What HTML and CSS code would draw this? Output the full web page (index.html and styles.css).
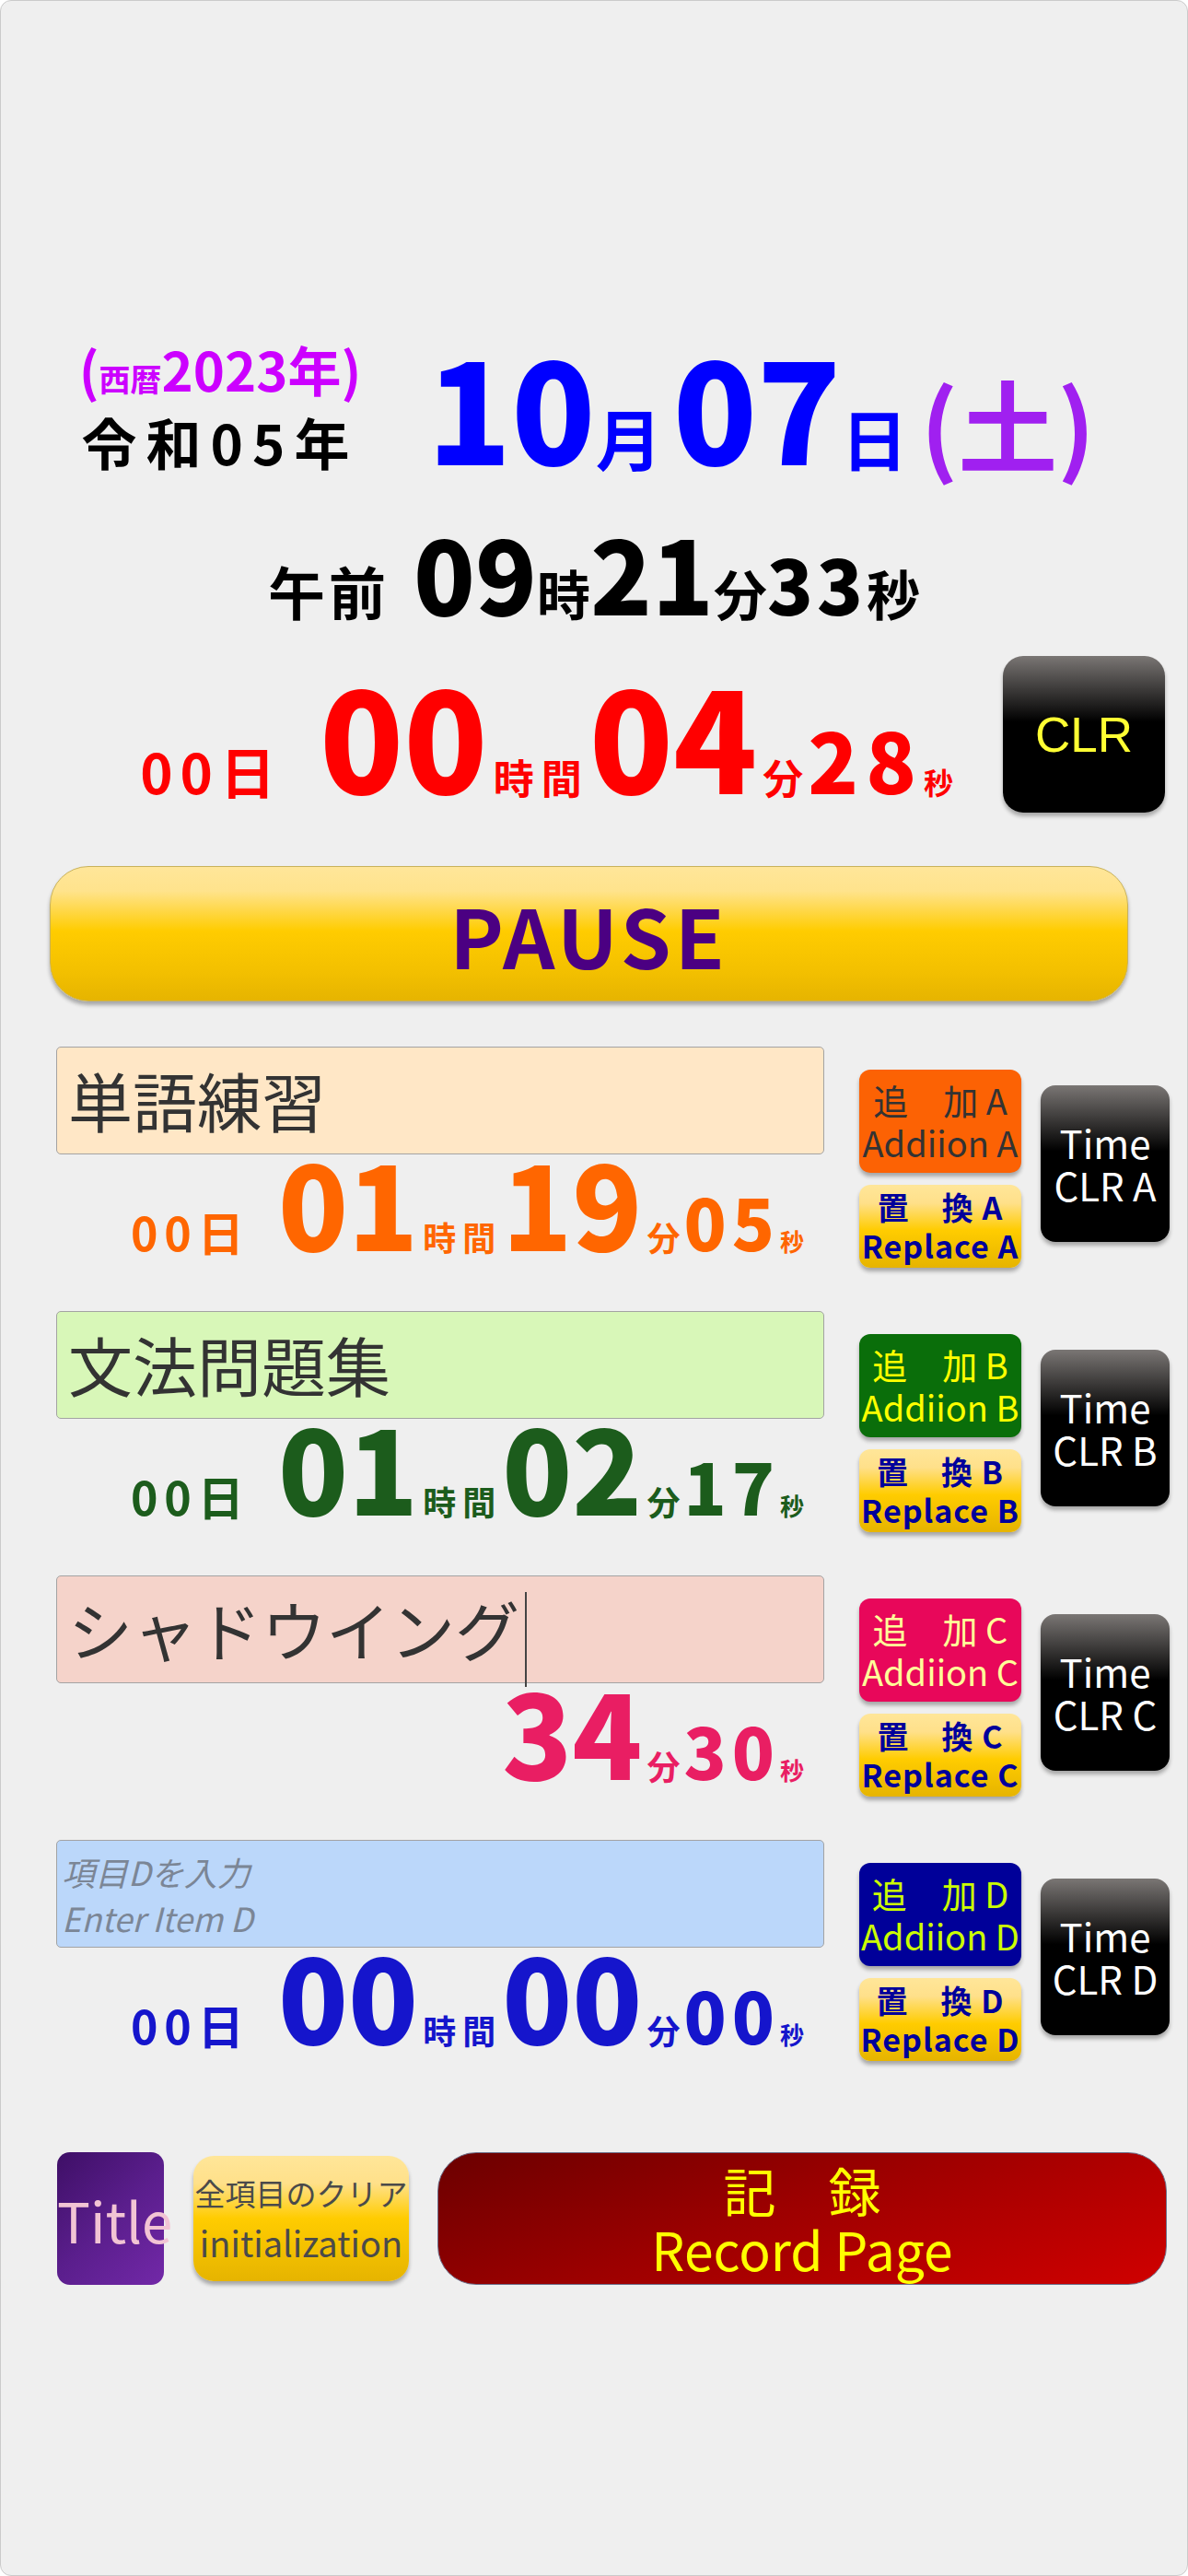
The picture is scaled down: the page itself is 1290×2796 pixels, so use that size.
FILE: index.html
```html
<!DOCTYPE html>
<html lang="ja">
<head>
    <meta charset="UTF-8">
    <meta name="viewport" content="width=device-width, initial-scale=1.0">
    <title>学習タイマー</title>
    <link rel="stylesheet" href="styles.css">
</head>
<body>
    <div class="app">
        <!-- 現在日時 -->
        <div class="date-row">
            <div class="era">
                <div class="seireki">(<span class="s-small">西暦</span>2023年)</div>
                <div class="wareki">令和05年</div>
            </div>
            <div class="date">10<span class="unit">月</span>07<span class="unit">日</span><span class="dow">(土)</span></div>
        </div>
        <div class="time-row">
            <span class="ampm">午前</span>09<span class="tu">時</span>21<span class="tu">分</span><span class="ss">33</span><span class="tu">秒</span>
        </div>

        <!-- 合計時間 -->
        <div class="total">
            <div class="timer timer-main">
                <span class="t-day">00日</span>00<span class="t-unit">時間</span>04<span class="t-unit">分</span><span class="t-sec">28</span><span class="t-sunit">秒</span>
            </div>
            <button class="btn-clr">CLR</button>
        </div>

        <button class="btn-pause">PAUSE</button>

        <!-- 項目 A -->
        <div class="item item-a">
            <div class="item-main">
                <div class="item-name">単語練習</div>
                <div class="timer timer-item">
                    <span class="t-day">00日</span>01<span class="t-unit">時間</span>19<span class="t-unit">分</span><span class="t-sec">05</span><span class="t-sunit">秒</span>
                </div>
            </div>
            <div class="item-btns">
                <button class="btn-add">追　加 A<br>Addiion A</button>
                <button class="btn-replace">置　換 A<br>Replace A</button>
            </div>
            <button class="btn-timeclr">Time<br>CLR A</button>
        </div>

        <!-- 項目 B -->
        <div class="item item-b">
            <div class="item-main">
                <div class="item-name">文法問題集</div>
                <div class="timer timer-item">
                    <span class="t-day">00日</span>01<span class="t-unit">時間</span>02<span class="t-unit">分</span><span class="t-sec">17</span><span class="t-sunit">秒</span>
                </div>
            </div>
            <div class="item-btns">
                <button class="btn-add">追　加 B<br>Addiion B</button>
                <button class="btn-replace">置　換 B<br>Replace B</button>
            </div>
            <button class="btn-timeclr">Time<br>CLR B</button>
        </div>

        <!-- 項目 C -->
        <div class="item item-c">
            <div class="item-main">
                <div class="item-name">シャドウイング<span class="caret"></span></div>
                <div class="timer timer-item">
                    34<span class="t-unit">分</span><span class="t-sec">30</span><span class="t-sunit">秒</span>
                </div>
            </div>
            <div class="item-btns">
                <button class="btn-add">追　加 C<br>Addiion C</button>
                <button class="btn-replace">置　換 C<br>Replace C</button>
            </div>
            <button class="btn-timeclr">Time<br>CLR C</button>
        </div>

        <!-- 項目 D -->
        <div class="item item-d">
            <div class="item-main">
                <div class="item-name placeholder">項目Dを入力<br>Enter Item D</div>
                <div class="timer timer-item">
                    <span class="t-day">00日</span>00<span class="t-unit">時間</span>00<span class="t-unit">分</span><span class="t-sec">00</span><span class="t-sunit">秒</span>
                </div>
            </div>
            <div class="item-btns">
                <button class="btn-add">追　加 D<br>Addiion D</button>
                <button class="btn-replace">置　換 D<br>Replace D</button>
            </div>
            <button class="btn-timeclr">Time<br>CLR D</button>
        </div>

        <div class="footer-row">
            <button class="btn-title">Title</button>
            <button class="btn-init">全項目のクリア<br><span class="init-en">initialization</span></button>
            <button class="btn-record">記　録<br>Record Page</button>
        </div>
    </div>
</body>
</html>
```

FILE: styles.css
```css
* {
    margin: 0;
    padding: 0;
    box-sizing: border-box;
}

body {
    background: #ffffff;
    font-family: "Noto Sans CJK JP", "Noto Sans", sans-serif;
}

button {
    font-family: inherit;
    border: none;
    cursor: pointer;
    box-shadow: 0 4px 4px rgba(0, 0, 0, 0.3);
}

.app {
    width: 1290px;
    height: 2796px;
    border: 1px solid #cbcbcb;
    border-radius: 12px;
    background: #efefef;
    padding-top: 364px;
}

/* 日付 */
.date-row {
    display: flex;
    align-items: last baseline;
}

.era {
    width: 420px;
    padding-left: 56px;
    text-align: center;
}

.seireki {
    font-size: 58px;
    line-height: 58px;
    font-weight: 700;
    color: #cc00ff;
}

.s-small {
    font-size: 34px;
    line-height: 1;
}

.wareki {
    margin-top: 20px;
    font-size: 60px;
    line-height: 60px;
    font-weight: 700;
    letter-spacing: 10px;
    color: #000;
}

.date {
    margin-left: 43px;
    font-size: 150px;
    line-height: 150px;
    font-weight: 900;
    color: #0000ff;
}

.date span,
.time-row span,
.timer span {
    line-height: 1;
}

.date .unit {
    margin-right: 12px;
    font-size: 72px;
    font-weight: 700;
}

.date .dow {
    margin-left: 2px;
    font-size: 108px;
    font-weight: 700;
    color: #a020f0;
}

.time-row {
    margin-top: 50px;
    text-align: center;
    font-size: 110px;
    line-height: 110px;
    font-weight: 900;
    color: #000;
}

.time-row .ampm {
    margin-right: 26px;
    font-size: 62px;
    font-weight: 700;
    letter-spacing: 4px;
}

.time-row .tu {
    font-size: 58px;
    font-weight: 700;
}

.time-row .ss {
    font-size: 82px;
    letter-spacing: 4px;
}

/* タイマー */
.timer {
    font-weight: 900;
    white-space: nowrap;
}

.timer .t-day,
.timer .t-unit,
.timer .t-sunit {
    font-weight: 700;
}

.total {
    display: flex;
    justify-content: flex-end;
    align-items: center;
    gap: 54px;
    margin-top: 37px;
    padding-right: 24px;
}

.timer-main {
    font-size: 150px;
    line-height: 150px;
    color: #ff0000;
}

.timer-main .t-day {
    margin-right: 40px;
    font-size: 60px;
    letter-spacing: 8px;
}

.timer-main .t-unit {
    margin-left: 6px;
    font-size: 44px;
    letter-spacing: 8px;
}

.timer-main .t-sec {
    margin-left: -3px;
    font-size: 90px;
    letter-spacing: 8px;
}

.timer-main .t-sunit {
    font-size: 32px;
}

.btn-clr {
    width: 176px;
    height: 170px;
    border-radius: 22px;
    background: linear-gradient(#7a7674 0%, #000 42%, #000 100%);
    color: #ffff33;
    font-family: "Liberation Sans", Arial, sans-serif;
    font-size: 53px;
}

.btn-pause {
    display: block;
    width: 1171px;
    height: 147px;
    margin: 58px 0 0 53px;
    border: 1px solid #c9b25a;
    border-radius: 42px;
    background: linear-gradient(#ffe699 0%, #ffe38c 18%, #ffcc00 48%, #f3c000 78%, #e6b400 100%);
    color: #4b0082;
    font-size: 88px;
    font-weight: 700;
    letter-spacing: 4px;
}

/* 項目 */
.item {
    display: flex;
    align-items: flex-start;
    height: 217px;
    margin-top: 49px;
    padding-left: 60px;
}

.item + .item {
    margin-top: 70px;
}

.item-main {
    width: 834px;
}

.item-name {
    height: 117px;
    padding-left: 12px;
    border: 1px solid #a3a3a3;
    border-radius: 5px;
    font-size: 70px;
    line-height: 113px;
    color: #333;
}

.caret {
    display: inline-block;
    width: 2px;
    height: 103px;
    margin-left: 6px;
    background: #444;
    vertical-align: middle;
}

.item-name.placeholder {
    padding: 8px 0 0 5px;
    font-size: 36px;
    line-height: 50px;
    font-style: italic;
    color: #7b8696;
}

.item-a .item-name { background: #ffe7c6; }
.item-b .item-name { background: #d8f7b8; }
.item-c .item-name { background: #f5d3ca; }
.item-d .item-name { background: #bbd7fa; }

.timer-item {
    padding-right: 22px;
    text-align: right;
    font-size: 125px;
    line-height: 102px;
}

.timer-item .t-day {
    margin-right: 30px;
    font-size: 50px;
    letter-spacing: 7px;
}

.timer-item .t-unit {
    margin-left: 5px;
    font-size: 36px;
    letter-spacing: 7px;
}

.timer-item .t-sec {
    margin-left: -3px;
    font-size: 76px;
    letter-spacing: 6px;
}

.timer-item .t-sunit {
    font-size: 26px;
}

.item-a .timer-item { color: #ff6600; }
.item-b .timer-item { color: #1c5c1c; }
.item-c .timer-item { color: #e91e63; }
.item-d .timer-item { color: #1515cc; }

.item-btns {
    display: flex;
    flex-direction: column;
    gap: 13px;
    width: 176px;
    margin: 25px 0 0 38px;
}

.btn-add,
.btn-replace {
    width: 176px;
    border-radius: 12px;
    white-space: nowrap;
}

.btn-add {
    height: 112px;
    font-size: 38px;
    line-height: 46px;
}

.btn-replace {
    height: 90px;
    background: linear-gradient(#ffe699 0%, #ffe08a 22%, #ffcc00 55%, #e6b400 100%);
    color: #00009b;
    font-size: 34px;
    font-weight: 700;
    line-height: 42px;
    letter-spacing: 1px;
}

.item-a .btn-add { background: #fc6204; color: #333; }
.item-b .btn-add { background: #0a6e0a; color: #ffff00; }
.item-c .btn-add { background: #e8075a; color: #ffff99; }
.item-d .btn-add { background: #000099; color: #ccff00; }

.btn-timeclr {
    width: 140px;
    height: 170px;
    margin: 42px 0 0 21px;
    border-radius: 16px;
    background: linear-gradient(#7a7674 0%, #000 42%, #000 100%);
    color: #fff;
    font-size: 42px;
    line-height: 46px;
}

/* 下段ボタン */
.footer-row {
    display: flex;
    align-items: center;
    margin-top: 122px;
    padding-left: 61px;
}

.btn-title {
    width: 116px;
    height: 144px;
    border-radius: 14px;
    background: linear-gradient(135deg, #3e0f66 0%, #5a1e8c 50%, #7228a8 100%);
    color: #f2c4d4;
    font-size: 60px;
    box-shadow: none;
}

.btn-init {
    width: 234px;
    height: 136px;
    margin-left: 32px;
    border-radius: 22px;
    background: linear-gradient(#ffe699 0%, #ffe08a 22%, #ffcc00 50%, #e6b400 100%);
    color: #4a4a4a;
    font-size: 33px;
    line-height: 54px;
    white-space: nowrap;
}

.init-en {
    font-size: 38px;
}

.btn-record {
    width: 792px;
    height: 144px;
    margin-left: 31px;
    border: 1px solid #6d6f8a;
    border-radius: 42px;
    background: linear-gradient(160deg, #6b0000 0%, #9c0000 45%, #d00000 100%);
    color: #ffff00;
    font-size: 57px;
    line-height: 64px;
    box-shadow: none;
}
```
